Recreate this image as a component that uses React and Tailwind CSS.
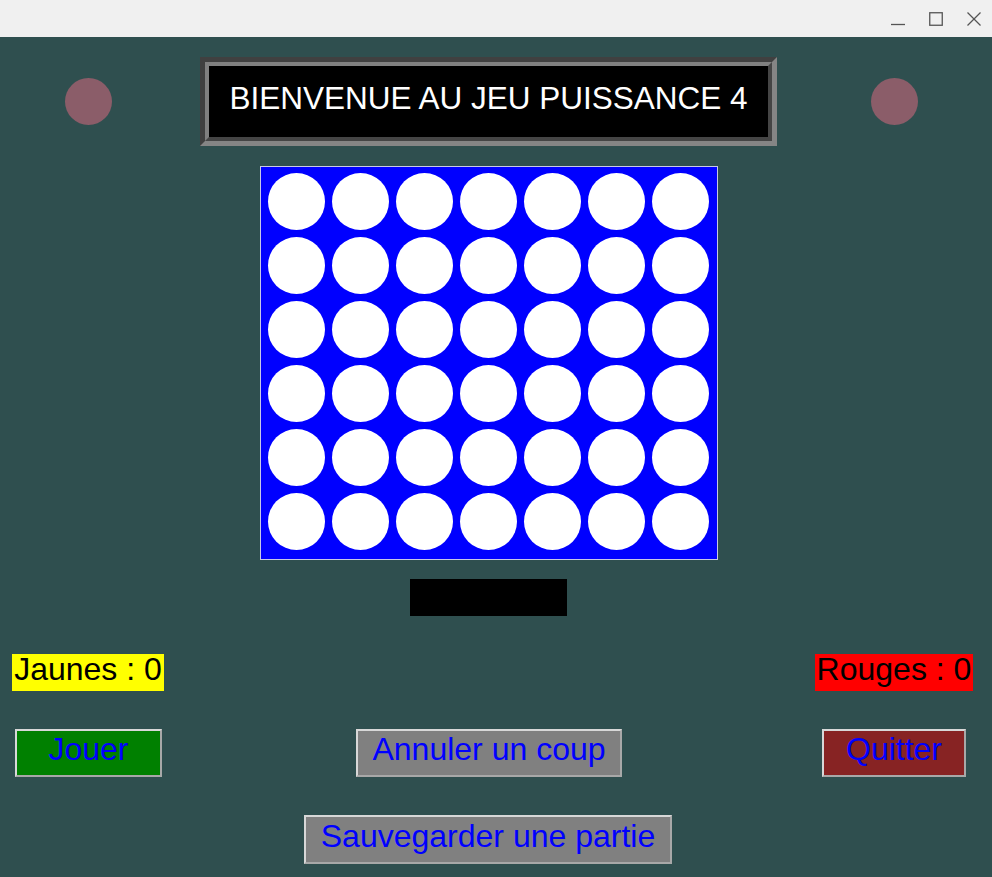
import React from "react";

const font = { fontFamily: '"Liberation Sans", Arial, sans-serif' };

function TitleBar() {
  return (
    <div className="h-[37px] bg-[#f0f0f0] flex items-center justify-end pr-[11px] gap-[24px]">
      <svg width="14" height="14" viewBox="0 0 14 14">
        <line x1="0" y1="12.5" x2="14" y2="12.5" stroke="#555" strokeWidth="1.3" />
      </svg>
      <svg width="14" height="14" viewBox="0 0 14 14">
        <rect x="0.75" y="0.75" width="12.5" height="12.5" fill="none" stroke="#555" strokeWidth="1.3" />
      </svg>
      <svg width="14" height="14" viewBox="0 0 14 14">
        <line x1="0.5" y1="0.5" x2="13.5" y2="13.5" stroke="#555" strokeWidth="1.3" />
        <line x1="13.5" y1="0.5" x2="0.5" y2="13.5" stroke="#555" strokeWidth="1.3" />
      </svg>
    </div>
  );
}

function Banner() {
  return (
    <div className="w-[577px] h-[89px] border-[5px] border-t-[#404040] border-l-[#404040] border-b-[#858585] border-r-[#858585]">
      <div className="w-full h-full border-[4px] border-t-[#808080] border-l-[#808080] border-b-[#454545] border-r-[#454545] bg-black flex justify-center items-start pt-[17px]">
        <span className="text-white text-[31.5px] leading-[30px]" style={font}>
          BIENVENUE AU JEU PUISSANCE 4
        </span>
      </div>
    </div>
  );
}

function Board() {
  const cells = Array.from({ length: 42 });
  return (
    <div className="w-[458px] h-[394px] bg-[#0000ff] border border-[#c8c8e8] pl-[7px] pt-[6px] grid grid-cols-[repeat(7,57px)] auto-rows-[57px] gap-[7px] content-start">
      {cells.map((_, i) => (
        <div key={i} className="w-[57px] h-[57px] rounded-full bg-white" />
      ))}
    </div>
  );
}

function Btn({ children, className }) {
  return (
    <div
      className={
        "h-[48px] border-2 border-t-[#d8d8d8] border-l-[#d8d8d8] border-b-[#a8a8a8] border-r-[#a8a8a8] flex justify-center items-start pt-[3px] " +
        className
      }
    >
      <span className="text-[#0000ff] text-[32px] leading-[30px]" style={font}>
        {children}
      </span>
    </div>
  );
}

export default function App() {
  return (
    <div className="w-[992px] h-[877px] flex flex-col overflow-hidden" style={font}>
      <TitleBar />
      <div className="flex-1 bg-[#2f4f4f] flex flex-col">
        <div className="flex items-center mt-[20px] pl-[65px]">
          <div className="w-[47px] h-[47px] rounded-full bg-[#8b5d69]" />
          <div className="ml-[88px]">
            <Banner />
          </div>
          <div className="ml-[94px] w-[47px] h-[47px] rounded-full bg-[#8b5d69]" />
        </div>

        <div className="mt-[20px] ml-[260px]">
          <Board />
        </div>

        <div className="mt-[19px] ml-[410px] w-[157px] h-[37px] bg-black" />

        <div className="mt-[38px] flex justify-between pl-[12px] pr-[19px]">
          <div className="w-[152px] h-[37px] bg-[#ffff00] flex justify-center items-start">
            <span className="text-black text-[32px] leading-[30px]">Jaunes : 0</span>
          </div>
          <div className="w-[158px] h-[37px] bg-[#ff0000] flex justify-center items-start">
            <span className="text-black text-[32px] leading-[30px]">Rouges : 0</span>
          </div>
        </div>

        <div className="mt-[38px] flex pl-[15px]">
          <Btn className="w-[147px] bg-[#008000]">Jouer</Btn>
          <Btn className="ml-[194px] w-[266px] bg-[#808080]">Annuler un coup</Btn>
          <Btn className="ml-[200px] w-[144px] bg-[#872323]">Quitter</Btn>
        </div>

        <div className="mt-[38px] flex pl-[304px]">
          <Btn className="w-[368px] h-[49px] bg-[#808080] pt-[4px]">Sauvegarder une partie</Btn>
        </div>
      </div>
    </div>
  );
}
